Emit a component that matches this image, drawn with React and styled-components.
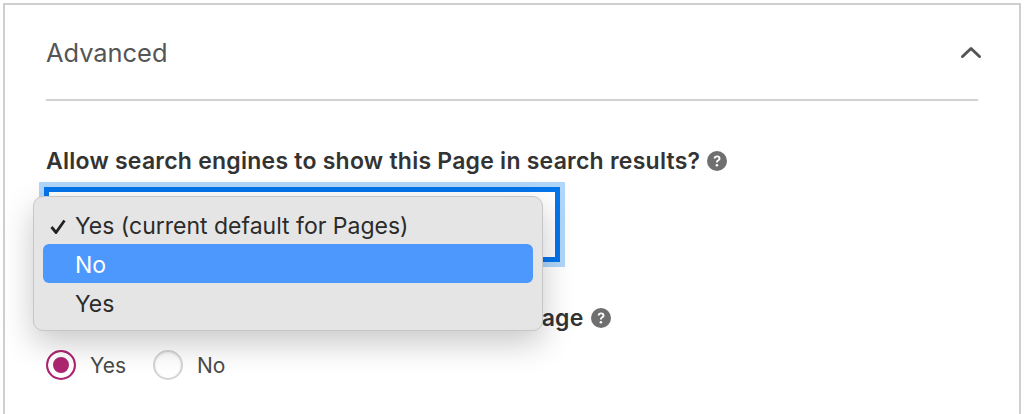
import * as React from "react";
import styled, { createGlobalStyle } from "styled-components";

const GlobalStyle = createGlobalStyle`
  html, body {
    margin: 0;
    background: #fff;
    overflow: hidden;
  }
  body {
    font-family: Inter, "Liberation Sans", sans-serif;
  }
`;

const Panel = styled.section`
  box-sizing: border-box;
  width: 1018px;
  height: 411px;
  margin: 3px 0 0 3px;
  padding: 0 41px 0 41px;
  border: 2px solid #cfcfcf;
  border-bottom: 0;
`;

const Header = styled.header`
  height: 96px;
  box-sizing: border-box;
  padding: 30px 0 0;
  display: flex;
  justify-content: space-between;
  align-items: flex-start;
  border-bottom: 2px solid #d2d2d2;
`;

const Title = styled.h2`
  margin: 0;
  font-size: 25.4px;
  line-height: 36px;
  font-weight: 400;
  color: #555;
`;

const Chevron = styled.svg`
  width: 22px;
  height: 14px;
  margin: 10px -4px 0 0;
`;

const Field = styled.div`
  position: relative;
  padding-top: 46px;
`;

const Label = styled.label`
  display: flex;
  align-items: center;
  gap: 7px;
  height: 28px;
  font-size: 23px;
  letter-spacing: 0.24px;
  font-weight: 600;
  color: #333;
`;

const SelectBox = styled.div`
  box-sizing: border-box;
  width: 516px;
  height: 75px;
  margin: 12px 0 0 -2px;
  border: 5px solid #0575ec;
  background: #fff;
  box-shadow: 0 0 0 5px #b0d7fb;
`;

const Menu = styled.ul`
  position: absolute;
  left: -13px;
  top: 95px;
  box-sizing: border-box;
  width: 510px;
  height: 135px;
  margin: 0;
  padding: 8px 9px;
  list-style: none;
  background: #e5e5e5;
  border: 1px solid #c6c6c6;
  border-radius: 10px;
  box-shadow: 0 12px 32px rgba(0, 0, 0, 0.22);
  z-index: 2;
`;

const MenuItem = styled.li`
  position: relative;
  box-sizing: border-box;
  height: 39px;
  padding: 2px 0 0 32px;
  display: flex;
  align-items: center;
  font-size: 23px;
  border-radius: 6px;
  color: ${(p) => (p.$active ? "#fff" : "#2b2b2b")};
  background: ${(p) => (p.$active ? "#4d98fd" : "transparent")};
`;

const Tick = styled.svg`
  position: absolute;
  left: 7px;
  top: 14px;
  width: 16px;
  height: 15px;
`;

const SecondField = styled.div`
  margin-top: 42px;
`;

const RadioRow = styled.div`
  display: flex;
  align-items: center;
  margin-top: 17px;
  height: 32px;
`;

const Radio = styled.span`
  box-sizing: border-box;
  width: 30px;
  height: 30px;
  border-radius: 50%;
  background: ${(p) => (p.$checked ? "#ad2570" : "#fff")};
  border: ${(p) => (p.$checked ? "2px solid #ad2570" : "2px solid #d4d4d4")};
  box-shadow: ${(p) => (p.$checked ? "inset 0 0 0 5px #fff" : "inset 0 1px 3px rgba(0,0,0,0.08)")};
`;

const RadioText = styled.span`
  margin: 0 27px 0 14px;
  font-size: 21px;
  color: #4a4a4a;
`;

function HelpIcon() {
  return (
    <svg width="20" height="20" viewBox="0 0 20 20" aria-hidden="true">
      <circle cx="10" cy="10" r="10" fill="#6f6f6f" />
      <path
        d="M6.6 7.6C6.8 5.6 8.2 4.6 10.1 4.6c2 0 3.4 1.1 3.4 2.8 0 1.3-.7 2-1.7 2.6-.8.5-1 .8-1 1.6H9c0-1.4.3-2 1.3-2.7.8-.5 1.2-.9 1.2-1.5 0-.7-.6-1.1-1.4-1.1-.9 0-1.4.5-1.5 1.3z"
        fill="#fff"
      />
      <circle cx="9.9" cy="14.2" r="1.3" fill="#fff" />
    </svg>
  );
}

export default function App() {
  return (
    <>
      <GlobalStyle />
      <Panel>
        <Header>
          <Title>Advanced</Title>
          <Chevron viewBox="0 0 22 14">
            <path d="M2.5 11.5L11 3.5l8.5 8" fill="none" stroke="#555" strokeWidth="3" strokeLinecap="round" strokeLinejoin="round" />
          </Chevron>
        </Header>
        <Field>
          <Label>
            Allow search engines to show this Page in search results?
            <HelpIcon />
          </Label>
          <SelectBox />
          <Menu>
            <MenuItem>
              <Tick viewBox="0 0 16 15">
                <path d="M1.5 8l4.5 5.5 8.5-12" fill="none" stroke="#222" strokeWidth="2.8" />
              </Tick>
              Yes (current default for Pages)
            </MenuItem>
            <MenuItem $active>No</MenuItem>
            <MenuItem>Yes</MenuItem>
          </Menu>
          <SecondField>
            <Label>
              Should search engines follow links on this Page
              <HelpIcon />
            </Label>
            <RadioRow>
              <Radio $checked />
              <RadioText>Yes</RadioText>
              <Radio />
              <RadioText>No</RadioText>
            </RadioRow>
          </SecondField>
        </Field>
      </Panel>
    </>
  );
}
